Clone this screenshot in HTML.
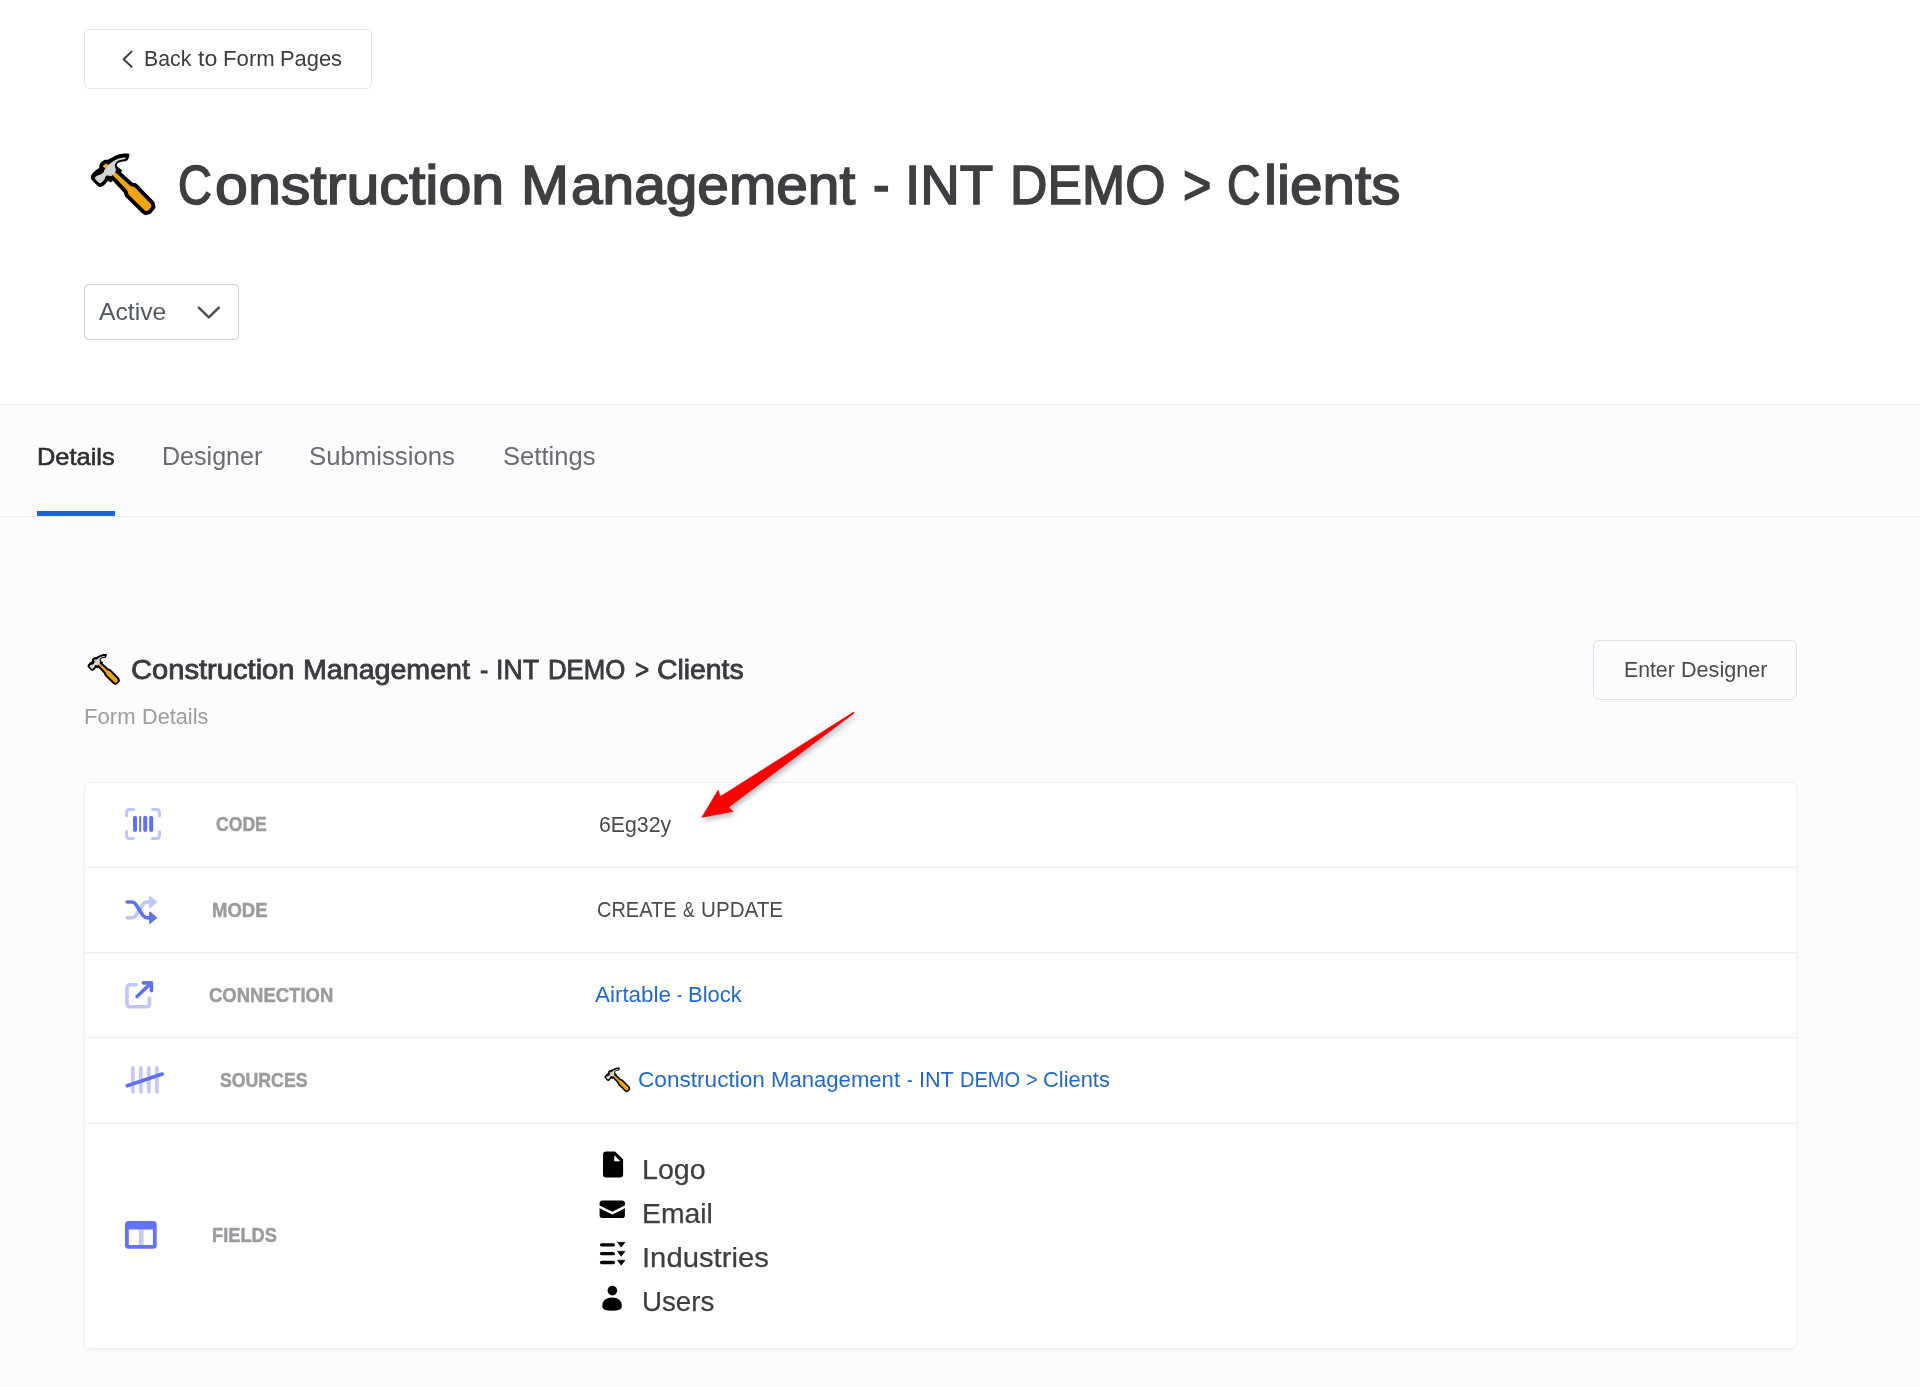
<!DOCTYPE html>
<html lang="en">
<head>
<meta charset="utf-8">
<title>Construction Management - INT DEMO &gt; Clients</title>
<style>
*{box-sizing:border-box;margin:0;padding:0}
html,body{width:1920px;height:1387px}
body{overflow:hidden}
body{font-family:"Liberation Sans",sans-serif;background:#fcfcfe;color:#3a3b3f;position:relative}
.abs{position:absolute}
.t{position:absolute;white-space:nowrap;line-height:1;transform-origin:0 0}
#hdr{position:absolute;left:0;top:0;width:1920px;height:405px;background:#fff;border-bottom:1px solid #e9ebf2}
#tabsline{position:absolute;left:0;top:516px;width:1920px;height:1px;background:#eeeef2}
.btn{position:absolute;border:1px solid #e6e7ee;border-radius:5px;background:#fff}
#card{position:absolute;left:84px;top:782px;width:1713px;height:567px;background:#fff;border:1px solid #f0f0f6;border-radius:6px;box-shadow:0 1px 3px rgba(60,60,100,.05)}
.div{position:absolute;left:85px;width:1711px;height:1px;background:#ececf3}
svg{position:absolute;overflow:visible}
</style>
</head>
<body>
<div id="hdr"></div>
<div class="btn" style="left:84px;top:29px;width:288px;height:60px"></div>
<div class="btn" style="left:84px;top:284px;width:155px;height:56px;border-color:#cbd0d6;border-radius:4px"></div>
<div class="abs" style="left:37px;top:511px;width:78px;height:5px;background:#1b63d8"></div>
<div id="tabsline"></div>
<div class="btn" style="left:1593px;top:640px;width:204px;height:60px;background:#fcfcfe;border-color:#dfe2e8;border-radius:6px"></div>
<div id="card"></div>
<div class="div" style="top:867px"></div>
<div class="div" style="top:952px"></div>
<div class="div" style="top:1037px"></div>
<div class="div" style="top:1123px"></div>
<!-- texts -->
<div class="t" id="t_back_0" style="left:144.00px;top:47.84px;font-size:21.22px;color:#3c3d41;transform:scaleX(1.0029)">Back</div>
<div class="t" id="t_back_1" style="left:198.30px;top:47.84px;font-size:21.22px;color:#3c3d41;transform:scaleX(1.0891)">to</div>
<div class="t" id="t_back_2" style="left:223.15px;top:47.84px;font-size:21.22px;color:#3c3d41;transform:scaleX(1.0454)">Form</div>
<div class="t" id="t_back_3" style="left:280.27px;top:47.84px;font-size:21.22px;color:#3c3d41;transform:scaleX(1.0315)">Pages</div>
<div class="t" id="t_title_0" style="left:178.09px;top:157.82px;font-size:55.38px;color:#3e3f42;transform:scaleX(0.8457);-webkit-text-stroke:1.6px #3e3f42">C</div>
<div class="t" id="t_title_1" style="left:215.22px;top:157.82px;font-size:55.38px;color:#3e3f42;transform:scaleX(1.0677);-webkit-text-stroke:1.6px #3e3f42">onstruction</div>
<div class="t" id="t_title_2" style="left:521.07px;top:157.82px;font-size:55.38px;color:#3e3f42;transform:scaleX(1.0404);-webkit-text-stroke:1.6px #3e3f42">M</div>
<div class="t" id="t_title_3" style="left:571.37px;top:157.82px;font-size:55.38px;color:#3e3f42;transform:scaleX(1.0257);-webkit-text-stroke:1.6px #3e3f42">anagement</div>
<div class="t" id="t_title_4" style="left:873.22px;top:157.82px;font-size:55.38px;color:#3e3f42;transform:scaleX(0.8974);-webkit-text-stroke:1.6px #3e3f42">-</div>
<div class="t" id="t_title_5" style="left:905.15px;top:157.82px;font-size:55.38px;color:#3e3f42;transform:scaleX(0.9885);-webkit-text-stroke:1.6px #3e3f42">INT</div>
<div class="t" id="t_title_6" style="left:1009.70px;top:157.82px;font-size:55.38px;color:#3e3f42;transform:scaleX(0.9360);-webkit-text-stroke:1.6px #3e3f42">DEMO</div>
<div class="t" id="t_title_7" style="left:1182.95px;top:157.82px;font-size:55.38px;color:#3e3f42;transform:scaleX(0.8784);-webkit-text-stroke:1.6px #3e3f42">&gt;</div>
<div class="t" id="t_title_8" style="left:1227.30px;top:157.82px;font-size:55.38px;color:#3e3f42;transform:scaleX(0.8351);-webkit-text-stroke:1.6px #3e3f42">C</div>
<div class="t" id="t_title_9" style="left:1263.88px;top:157.82px;font-size:55.38px;color:#3e3f42;transform:scaleX(1.0548);-webkit-text-stroke:1.6px #3e3f42">lients</div>
<div class="t" id="t_active" style="left:99.00px;top:300.08px;font-size:24.71px;color:#505862;transform:scaleX(1.0010)">Active</div>
<div class="t" id="t_tab1" style="left:36.76px;top:444.87px;font-size:24.13px;color:#2e2f33;transform:scaleX(1.0535);-webkit-text-stroke:0.6px #2e2f33">Details</div>
<div class="t" id="t_tab2" style="left:161.68px;top:444.56px;font-size:24.85px;color:#6a6c72;transform:scaleX(1.0087)">Designer</div>
<div class="t" id="t_tab3" style="left:309.26px;top:444.56px;font-size:24.85px;color:#6a6c72;transform:scaleX(1.0357)">Submissions</div>
<div class="t" id="t_tab4" style="left:502.67px;top:444.56px;font-size:24.85px;color:#6a6c72;transform:scaleX(1.0300)">Settings</div>
<div class="t" id="t_sec_0" style="left:131.30px;top:656.04px;font-size:27.69px;color:#3a3b3f;transform:scaleX(1.0519);-webkit-text-stroke:0.85px #3a3b3f">Construction</div>
<div class="t" id="t_sec_1" style="left:303.21px;top:656.04px;font-size:27.69px;color:#3a3b3f;transform:scaleX(1.0330);-webkit-text-stroke:0.85px #3a3b3f">Management</div>
<div class="t" id="t_sec_2" style="left:479.56px;top:656.04px;font-size:27.69px;color:#3a3b3f;transform:scaleX(0.8932);-webkit-text-stroke:0.85px #3a3b3f">-</div>
<div class="t" id="t_sec_3" style="left:496.08px;top:656.04px;font-size:27.69px;color:#3a3b3f;transform:scaleX(0.9663);-webkit-text-stroke:0.85px #3a3b3f">INT</div>
<div class="t" id="t_sec_4" style="left:547.92px;top:656.04px;font-size:27.69px;color:#3a3b3f;transform:scaleX(0.9312);-webkit-text-stroke:0.85px #3a3b3f">DEMO</div>
<div class="t" id="t_sec_5" style="left:634.67px;top:656.04px;font-size:27.69px;color:#3a3b3f;transform:scaleX(0.8769);-webkit-text-stroke:0.85px #3a3b3f">&gt;</div>
<div class="t" id="t_sec_6" style="left:656.77px;top:656.04px;font-size:27.69px;color:#3a3b3f;transform:scaleX(1.0240);-webkit-text-stroke:0.85px #3a3b3f">Clients</div>
<div class="t" id="t_sub_0" style="left:84.29px;top:705.75px;font-size:21.8px;color:#9c9da1;transform:scaleX(1.0145)">Form</div>
<div class="t" id="t_sub_1" style="left:142.30px;top:705.75px;font-size:21.8px;color:#9c9da1;transform:scaleX(0.9950)">Details</div>
<div class="t" id="t_enter_0" style="left:1623.84px;top:658.70px;font-size:22.09px;color:#4a4b4f;transform:scaleX(0.9608)">Enter</div>
<div class="t" id="t_enter_1" style="left:1680.92px;top:658.70px;font-size:22.09px;color:#4a4b4f;transform:scaleX(0.9781)">Designer</div>
<div class="t" id="t_l1" style="left:216.47px;top:813.90px;font-size:20.2px;color:#9b9ca0;transform:scaleX(0.8713);font-weight:bold;-webkit-text-stroke:0.5px #9b9ca0">CODE</div>
<div class="t" id="t_l2" style="left:212.01px;top:899.65px;font-size:20.2px;color:#9b9ca0;transform:scaleX(0.9161);font-weight:bold;-webkit-text-stroke:0.5px #9b9ca0">MODE</div>
<div class="t" id="t_l3" style="left:208.53px;top:984.75px;font-size:20.2px;color:#9b9ca0;transform:scaleX(0.9158);font-weight:bold;-webkit-text-stroke:0.5px #9b9ca0">CONNECTION</div>
<div class="t" id="t_l4" style="left:220.22px;top:1069.65px;font-size:20.2px;color:#9b9ca0;transform:scaleX(0.8762);font-weight:bold;-webkit-text-stroke:0.5px #9b9ca0">SOURCES</div>
<div class="t" id="t_l5" style="left:211.82px;top:1224.90px;font-size:20.2px;color:#9b9ca0;transform:scaleX(0.9038);font-weight:bold;-webkit-text-stroke:0.5px #9b9ca0">FIELDS</div>
<div class="t" id="t_v1" style="left:599.27px;top:814.05px;font-size:21.8px;color:#4a4b4f;transform:scaleX(0.9757)">6Eg32y</div>
<div class="t" id="t_v2_0" style="left:596.58px;top:899.05px;font-size:21.8px;color:#4a4b4f;transform:scaleX(0.9161)">CREATE</div>
<div class="t" id="t_v2_1" style="left:683.10px;top:899.05px;font-size:21.8px;color:#4a4b4f;transform:scaleX(0.7933)">&amp;</div>
<div class="t" id="t_v2_2" style="left:700.95px;top:899.05px;font-size:21.8px;color:#4a4b4f;transform:scaleX(0.9454)">UPDATE</div>
<div class="t" id="t_v3_0" style="left:594.75px;top:984.30px;font-size:21.8px;color:#2468c9;transform:scaleX(1.0280)">Airtable</div>
<div class="t" id="t_v3_1" style="left:676.90px;top:984.30px;font-size:21.8px;color:#2468c9;transform:scaleX(0.7143)">-</div>
<div class="t" id="t_v3_2" style="left:688.39px;top:984.30px;font-size:21.8px;color:#2468c9;transform:scaleX(1.0086)">Block</div>
<div class="t" id="t_v4_0" style="left:637.89px;top:1069.30px;font-size:21.8px;color:#2468c9;transform:scaleX(1.0372)">Construction</div>
<div class="t" id="t_v4_1" style="left:771.15px;top:1069.30px;font-size:21.8px;color:#2468c9;transform:scaleX(1.0141)">Management</div>
<div class="t" id="t_v4_2" style="left:907.17px;top:1069.30px;font-size:21.8px;color:#2468c9;transform:scaleX(0.7717)">-</div>
<div class="t" id="t_v4_3" style="left:918.70px;top:1069.30px;font-size:21.8px;color:#2468c9;transform:scaleX(0.9883)">INT</div>
<div class="t" id="t_v4_4" style="left:959.66px;top:1069.30px;font-size:21.8px;color:#2468c9;transform:scaleX(0.9203)">DEMO</div>
<div class="t" id="t_v4_5" style="left:1025.76px;top:1069.30px;font-size:21.8px;color:#2468c9;transform:scaleX(0.9120)">&gt;</div>
<div class="t" id="t_v4_6" style="left:1042.76px;top:1069.30px;font-size:21.8px;color:#2468c9;transform:scaleX(1.0039)">Clients</div>
<div class="t" id="t_f1" style="left:641.72px;top:1155.10px;font-size:28.56px;color:#3d3e42;transform:scaleX(1.0020);-webkit-text-stroke:0.25px #3d3e42">Logo</div>
<div class="t" id="t_f2" style="left:641.74px;top:1199.10px;font-size:28.56px;color:#3d3e42;transform:scaleX(0.9928);-webkit-text-stroke:0.25px #3d3e42">Email</div>
<div class="t" id="t_f3" style="left:641.68px;top:1243.20px;font-size:28.56px;color:#3d3e42;transform:scaleX(1.0243);-webkit-text-stroke:0.25px #3d3e42">Industries</div>
<div class="t" id="t_f4" style="left:641.78px;top:1287.40px;font-size:28.56px;color:#3d3e42;transform:scaleX(0.9707);-webkit-text-stroke:0.25px #3d3e42">Users</div>
<!-- icons -->
<svg style="left:0;top:0" width="1920" height="1387" viewBox="0 0 1920 1387">
<!-- chevrons -->
<path d="M131.6 51.6 L123.6 59.2 L131.6 66.8" fill="none" stroke="#3c3d41" stroke-width="2" stroke-linecap="round" stroke-linejoin="round"/>
<path d="M198.8 307.6 L208.8 317.4 L218.8 307.6" fill="none" stroke="#4b535d" stroke-width="2.6" stroke-linecap="round" stroke-linejoin="round"/>
<!-- hammers -->
<g transform="translate(80 145) scale(1)"><path d="M49.25 9.04 C48.62 8.68 47.09 8.56 45.50 8.61 C43.91 8.65 41.41 8.97 39.73 9.33 C38.05 9.69 36.85 10.14 35.40 10.77 C33.96 11.39 32.28 12.45 31.08 13.08 C29.87 13.70 29.15 14.23 28.19 14.52 C27.23 14.81 26.27 14.52 25.31 14.81 C24.35 15.10 23.29 15.62 22.42 16.25 C21.56 16.87 20.64 17.74 20.12 18.56 C19.59 19.37 19.39 20.43 19.25 21.15 C19.11 21.87 19.54 22.40 19.25 22.88 C18.96 23.37 18.29 23.46 17.52 24.04 C16.75 24.62 15.64 25.34 14.63 26.35 C13.62 27.36 12.09 29.04 11.46 30.10 C10.84 31.15 10.74 31.78 10.88 32.69 C11.03 33.61 11.22 34.23 12.33 35.58 C13.43 36.92 16.22 39.69 17.52 40.77 C18.82 41.85 19.25 41.97 20.12 42.07 C20.98 42.16 21.85 41.85 22.71 41.35 C23.58 40.84 24.49 39.90 25.31 39.04 C26.12 38.17 26.94 36.59 27.62 36.15 C28.29 35.72 28.77 36.25 29.35 36.44 C29.92 36.63 30.31 37.74 31.08 37.31 C31.85 36.87 32.52 35.38 33.96 33.85 C35.40 32.31 38.38 29.42 39.73 28.08 C41.08 26.73 42.04 26.54 42.04 25.77 C42.04 25.00 40.45 24.13 39.73 23.46 C39.01 22.79 38.19 22.31 37.71 21.73 C37.23 21.15 36.70 20.67 36.85 20.00 C36.99 19.33 37.62 18.27 38.58 17.69 C39.54 17.12 41.32 16.83 42.62 16.54 C43.91 16.25 45.40 16.44 46.37 15.96 C47.33 15.48 47.90 14.52 48.38 13.65 C48.86 12.79 49.11 11.54 49.25 10.77 C49.39 10.00 49.87 9.40 49.25 9.04 Z" fill="#000"/><path d="M32.31 21.92 L51.52 39.35 L55.27 40.21 L72.58 57.81 L73.56 62.02 L69.81 66.92 L65.77 68.25 L63.46 66.92 L46.73 50.37 L45.58 46.62 L35.60 35.94 L27.12 27.69 Z" fill="#efa50f" stroke="#000" stroke-width="3.9" stroke-linejoin="round"/><path d="M45.36 12.56 C44.42 12.49 41.39 12.82 39.73 13.22 C38.07 13.62 36.85 14.21 35.40 14.95 C33.96 15.70 32.28 16.85 31.08 17.69 C29.87 18.53 29.15 19.09 28.19 20.00 C27.23 20.91 25.98 22.21 25.31 23.17 C24.63 24.13 24.54 24.95 24.15 25.77 C23.77 26.59 23.62 27.45 23.00 28.08 C22.37 28.70 21.46 29.04 20.40 29.52 C19.35 30.00 17.57 30.43 16.65 30.96 C15.74 31.49 15.07 32.07 14.92 32.69 C14.78 33.32 15.07 33.85 15.79 34.71 C16.51 35.58 18.38 37.36 19.25 37.88 C20.12 38.41 20.16 38.37 20.98 37.88 C21.80 37.40 23.43 35.96 24.15 35.00 C24.87 34.04 24.92 32.84 25.31 32.12 C25.69 31.39 25.88 30.91 26.46 30.67 C27.04 30.43 28.05 30.58 28.77 30.67 C29.49 30.77 30.26 31.30 30.79 31.25 C31.32 31.20 31.17 31.15 31.94 30.38 C32.71 29.62 34.78 27.79 35.40 26.63 C36.03 25.48 35.79 24.37 35.69 23.46 C35.60 22.55 34.83 22.07 34.83 21.15 C34.83 20.24 35.12 18.88 35.69 17.98 C36.27 17.08 37.13 16.31 38.29 15.73 C39.44 15.15 41.44 14.87 42.62 14.52 C43.79 14.17 44.90 13.98 45.36 13.65 C45.81 13.33 46.29 12.63 45.36 12.56 Z" fill="#d4d4d4"/><path d="M22.71 21.44 L25.88 18.27 L28.48 20.00 L25.31 23.17 Z" fill="#efb43c"/></g>
<g transform="translate(82.15 649.8) scale(0.5)"><path d="M49.25 9.04 C48.62 8.68 47.09 8.56 45.50 8.61 C43.91 8.65 41.41 8.97 39.73 9.33 C38.05 9.69 36.85 10.14 35.40 10.77 C33.96 11.39 32.28 12.45 31.08 13.08 C29.87 13.70 29.15 14.23 28.19 14.52 C27.23 14.81 26.27 14.52 25.31 14.81 C24.35 15.10 23.29 15.62 22.42 16.25 C21.56 16.87 20.64 17.74 20.12 18.56 C19.59 19.37 19.39 20.43 19.25 21.15 C19.11 21.87 19.54 22.40 19.25 22.88 C18.96 23.37 18.29 23.46 17.52 24.04 C16.75 24.62 15.64 25.34 14.63 26.35 C13.62 27.36 12.09 29.04 11.46 30.10 C10.84 31.15 10.74 31.78 10.88 32.69 C11.03 33.61 11.22 34.23 12.33 35.58 C13.43 36.92 16.22 39.69 17.52 40.77 C18.82 41.85 19.25 41.97 20.12 42.07 C20.98 42.16 21.85 41.85 22.71 41.35 C23.58 40.84 24.49 39.90 25.31 39.04 C26.12 38.17 26.94 36.59 27.62 36.15 C28.29 35.72 28.77 36.25 29.35 36.44 C29.92 36.63 30.31 37.74 31.08 37.31 C31.85 36.87 32.52 35.38 33.96 33.85 C35.40 32.31 38.38 29.42 39.73 28.08 C41.08 26.73 42.04 26.54 42.04 25.77 C42.04 25.00 40.45 24.13 39.73 23.46 C39.01 22.79 38.19 22.31 37.71 21.73 C37.23 21.15 36.70 20.67 36.85 20.00 C36.99 19.33 37.62 18.27 38.58 17.69 C39.54 17.12 41.32 16.83 42.62 16.54 C43.91 16.25 45.40 16.44 46.37 15.96 C47.33 15.48 47.90 14.52 48.38 13.65 C48.86 12.79 49.11 11.54 49.25 10.77 C49.39 10.00 49.87 9.40 49.25 9.04 Z" fill="#000"/><path d="M32.31 21.92 L51.52 39.35 L55.27 40.21 L72.58 57.81 L73.56 62.02 L69.81 66.92 L65.77 68.25 L63.46 66.92 L46.73 50.37 L45.58 46.62 L35.60 35.94 L27.12 27.69 Z" fill="#efa50f" stroke="#000" stroke-width="3.9" stroke-linejoin="round"/><path d="M45.36 12.56 C44.42 12.49 41.39 12.82 39.73 13.22 C38.07 13.62 36.85 14.21 35.40 14.95 C33.96 15.70 32.28 16.85 31.08 17.69 C29.87 18.53 29.15 19.09 28.19 20.00 C27.23 20.91 25.98 22.21 25.31 23.17 C24.63 24.13 24.54 24.95 24.15 25.77 C23.77 26.59 23.62 27.45 23.00 28.08 C22.37 28.70 21.46 29.04 20.40 29.52 C19.35 30.00 17.57 30.43 16.65 30.96 C15.74 31.49 15.07 32.07 14.92 32.69 C14.78 33.32 15.07 33.85 15.79 34.71 C16.51 35.58 18.38 37.36 19.25 37.88 C20.12 38.41 20.16 38.37 20.98 37.88 C21.80 37.40 23.43 35.96 24.15 35.00 C24.87 34.04 24.92 32.84 25.31 32.12 C25.69 31.39 25.88 30.91 26.46 30.67 C27.04 30.43 28.05 30.58 28.77 30.67 C29.49 30.77 30.26 31.30 30.79 31.25 C31.32 31.20 31.17 31.15 31.94 30.38 C32.71 29.62 34.78 27.79 35.40 26.63 C36.03 25.48 35.79 24.37 35.69 23.46 C35.60 22.55 34.83 22.07 34.83 21.15 C34.83 20.24 35.12 18.88 35.69 17.98 C36.27 17.08 37.13 16.31 38.29 15.73 C39.44 15.15 41.44 14.87 42.62 14.52 C43.79 14.17 44.90 13.98 45.36 13.65 C45.81 13.33 46.29 12.63 45.36 12.56 Z" fill="#d4d4d4"/><path d="M22.71 21.44 L25.88 18.27 L28.48 20.00 L25.31 23.17 Z" fill="#efb43c"/></g>
<g transform="translate(600.1 1064.1) scale(0.4)"><path d="M49.25 9.04 C48.62 8.68 47.09 8.56 45.50 8.61 C43.91 8.65 41.41 8.97 39.73 9.33 C38.05 9.69 36.85 10.14 35.40 10.77 C33.96 11.39 32.28 12.45 31.08 13.08 C29.87 13.70 29.15 14.23 28.19 14.52 C27.23 14.81 26.27 14.52 25.31 14.81 C24.35 15.10 23.29 15.62 22.42 16.25 C21.56 16.87 20.64 17.74 20.12 18.56 C19.59 19.37 19.39 20.43 19.25 21.15 C19.11 21.87 19.54 22.40 19.25 22.88 C18.96 23.37 18.29 23.46 17.52 24.04 C16.75 24.62 15.64 25.34 14.63 26.35 C13.62 27.36 12.09 29.04 11.46 30.10 C10.84 31.15 10.74 31.78 10.88 32.69 C11.03 33.61 11.22 34.23 12.33 35.58 C13.43 36.92 16.22 39.69 17.52 40.77 C18.82 41.85 19.25 41.97 20.12 42.07 C20.98 42.16 21.85 41.85 22.71 41.35 C23.58 40.84 24.49 39.90 25.31 39.04 C26.12 38.17 26.94 36.59 27.62 36.15 C28.29 35.72 28.77 36.25 29.35 36.44 C29.92 36.63 30.31 37.74 31.08 37.31 C31.85 36.87 32.52 35.38 33.96 33.85 C35.40 32.31 38.38 29.42 39.73 28.08 C41.08 26.73 42.04 26.54 42.04 25.77 C42.04 25.00 40.45 24.13 39.73 23.46 C39.01 22.79 38.19 22.31 37.71 21.73 C37.23 21.15 36.70 20.67 36.85 20.00 C36.99 19.33 37.62 18.27 38.58 17.69 C39.54 17.12 41.32 16.83 42.62 16.54 C43.91 16.25 45.40 16.44 46.37 15.96 C47.33 15.48 47.90 14.52 48.38 13.65 C48.86 12.79 49.11 11.54 49.25 10.77 C49.39 10.00 49.87 9.40 49.25 9.04 Z" fill="#000"/><path d="M32.31 21.92 L51.52 39.35 L55.27 40.21 L72.58 57.81 L73.56 62.02 L69.81 66.92 L65.77 68.25 L63.46 66.92 L46.73 50.37 L45.58 46.62 L35.60 35.94 L27.12 27.69 Z" fill="#efa50f" stroke="#000" stroke-width="3.9" stroke-linejoin="round"/><path d="M45.36 12.56 C44.42 12.49 41.39 12.82 39.73 13.22 C38.07 13.62 36.85 14.21 35.40 14.95 C33.96 15.70 32.28 16.85 31.08 17.69 C29.87 18.53 29.15 19.09 28.19 20.00 C27.23 20.91 25.98 22.21 25.31 23.17 C24.63 24.13 24.54 24.95 24.15 25.77 C23.77 26.59 23.62 27.45 23.00 28.08 C22.37 28.70 21.46 29.04 20.40 29.52 C19.35 30.00 17.57 30.43 16.65 30.96 C15.74 31.49 15.07 32.07 14.92 32.69 C14.78 33.32 15.07 33.85 15.79 34.71 C16.51 35.58 18.38 37.36 19.25 37.88 C20.12 38.41 20.16 38.37 20.98 37.88 C21.80 37.40 23.43 35.96 24.15 35.00 C24.87 34.04 24.92 32.84 25.31 32.12 C25.69 31.39 25.88 30.91 26.46 30.67 C27.04 30.43 28.05 30.58 28.77 30.67 C29.49 30.77 30.26 31.30 30.79 31.25 C31.32 31.20 31.17 31.15 31.94 30.38 C32.71 29.62 34.78 27.79 35.40 26.63 C36.03 25.48 35.79 24.37 35.69 23.46 C35.60 22.55 34.83 22.07 34.83 21.15 C34.83 20.24 35.12 18.88 35.69 17.98 C36.27 17.08 37.13 16.31 38.29 15.73 C39.44 15.15 41.44 14.87 42.62 14.52 C43.79 14.17 44.90 13.98 45.36 13.65 C45.81 13.33 46.29 12.63 45.36 12.56 Z" fill="#d4d4d4"/><path d="M22.71 21.44 L25.88 18.27 L28.48 20.00 L25.31 23.17 Z" fill="#efb43c"/></g>
<!-- barcode-read -->
<g fill="none" stroke="#bfc6fb" stroke-width="3" stroke-linecap="round" stroke-linejoin="round">
<path d="M126.5 816 V812.5 Q126.5 809.5 129.5 809.5 H133.5"/>
<path d="M159.5 816 V812.5 Q159.5 809.5 156.5 809.5 H152.5"/>
<path d="M126.5 831.5 V835.5 Q126.5 838.5 129.5 838.5 H133.5"/>
<path d="M159.5 831.5 V835.5 Q159.5 838.5 156.5 838.5 H152.5"/>
</g>
<g stroke="#6070f2" stroke-linecap="round">
<path d="M135 817.7 V830" stroke-width="4"/>
<path d="M140.2 816.7 V831" stroke-width="2"/>
<path d="M145.2 817.7 V830" stroke-width="4"/>
<path d="M151.2 817.7 V830" stroke-width="4"/>
</g>
<!-- random / shuffle -->
<g fill="none" stroke-width="3.6" stroke-linecap="round" stroke-linejoin="round">
<path d="M127.2 917.8 H131.6 Q134.2 917.8 135.7 915.7 L143 904.2 Q144.5 902 147.1 902 H151" stroke="#bfc6fb"/>
<path d="M127.2 902 H131.6 Q134.2 902 135.7 904.2 L143 915.6 Q144.5 917.8 147.1 917.8 H151" stroke="#6070f2"/>
</g>
<path d="M149.8 896.5 L156.4 902 L149.8 907.5 Z" fill="#bfc6fb" stroke="#bfc6fb" stroke-width="1.4" stroke-linejoin="round"/>
<path d="M149.8 912.3 L156.4 917.8 L149.8 923.3 Z" fill="#6070f2" stroke="#6070f2" stroke-width="1.4" stroke-linejoin="round"/>
<!-- external link -->
<path d="M136.2 984.8 H130.4 Q127 984.8 127 988.2 V1003.4 Q127 1006.8 130.4 1006.8 H146.1 Q149.5 1006.8 149.5 1003.4 V998.3" fill="none" stroke="#bfc6fb" stroke-width="3.6" stroke-linecap="round" stroke-linejoin="round"/>
<path d="M137 996.6 L150.6 983.6" fill="none" stroke="#6070f2" stroke-width="3.5" stroke-linecap="round"/>
<path d="M143.4 982.9 H151.4 V990.7" fill="none" stroke="#6070f2" stroke-width="3.6" stroke-linecap="round" stroke-linejoin="round"/>
<path d="M147 983 H151.4 V987.4 Z" fill="#6070f2"/>
<!-- tally -->
<g stroke="#c3c9fb" stroke-width="3.8" stroke-linecap="round">
<path d="M132.8 1068 V1091.5"/><path d="M140.8 1068 V1091.5"/><path d="M148.8 1068 V1091.5"/><path d="M156.8 1068 V1091.5"/>
</g>
<path d="M127.2 1085.8 L162.3 1074" stroke="#6070f2" stroke-width="3.6" stroke-linecap="round"/>
<!-- columns -->
<path d="M128.5 1221 H153.2 Q156.7 1221 156.7 1224.5 V1245.3 Q156.7 1248.8 153.2 1248.8 H128.5 Q125 1248.8 125 1245.3 V1224.5 Q125 1221 128.5 1221 Z M128.8 1229.4 V1244.9 H139.2 V1229.4 Z M143.2 1229.4 V1244.9 H152.9 V1229.4 Z" fill="#6372f6" fill-rule="evenodd"/>
<rect x="139.2" y="1229.4" width="4" height="15.5" fill="#c5cafb"/>
<!-- file -->
<path d="M606 1151.5 H615 L623.1 1159.3 V1174.5 Q623.1 1177.5 620.1 1177.5 H606 Q603 1177.5 603 1174.5 V1154.5 Q603 1151.5 606 1151.5 Z" fill="#000"/>
<path d="M614.3 1155.2 V1161.3 H620.4 Z" fill="#fff"/>
<!-- envelope -->
<rect x="599.6" y="1200.4" width="25.3" height="17.7" rx="2.8" fill="#000"/>
<path d="M598.6 1206.3 L612.25 1213 L625.9 1206.3" fill="none" stroke="#fff" stroke-width="2.5"/>
<!-- list -->
<g stroke="#000" stroke-width="3.3" stroke-linecap="round">
<path d="M601.6 1244.9 H613.4"/><path d="M601.6 1253.7 H613.4"/><path d="M601.6 1262.5 H613.4"/>
</g>
<path d="M617.4 1242.3 H625 L621.2 1247.2 Z M617.4 1251.3 H625 L621.2 1256.2 Z M617.4 1260.2 H625 L621.2 1265.2 Z" fill="#000" stroke="#000" stroke-width=".6" stroke-linejoin="round"/>
<!-- user -->
<circle cx="612.4" cy="1290.6" r="4.8" fill="#000"/>
<path d="M602.3 1306.5 Q602.3 1297.6 612.05 1297.6 Q621.8 1297.6 621.8 1306.5 Q621.8 1310.8 612.05 1310.8 Q602.3 1310.8 602.3 1306.5 Z" fill="#000"/>
<!-- arrow -->
<path d="M853.6 712 L854 713.2 L728.8 807.2 L733 811.4 L701.7 817.4 L718.1 790 L720.2 796.6 Z" fill="#fd0000" stroke="#e80000" stroke-width=".5" style="filter:drop-shadow(2.5px 3.5px 2.5px rgba(40,50,60,.33))"/>
</svg>
</body>
</html>
